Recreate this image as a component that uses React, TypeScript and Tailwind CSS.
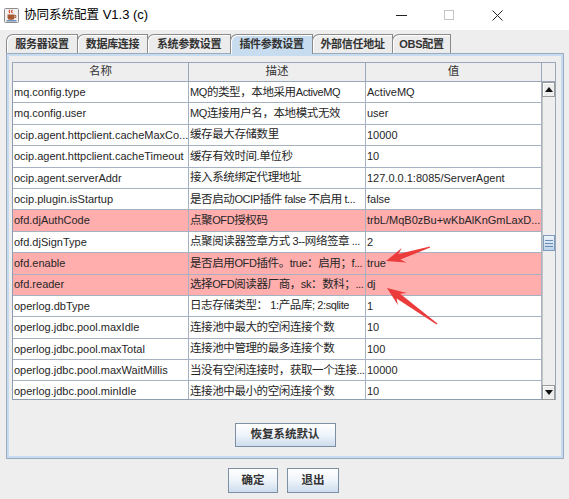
import React from "react";

type Row = { name: string; desc: string; value: string; hl?: boolean };

const rows: Row[] = [
  { name: "mq.config.type", desc: "MQ的类型，本地采用ActiveMQ", value: "ActiveMQ" },
  { name: "mq.config.user", desc: "MQ连接用户名，本地模式无效", value: "user" },
  { name: "ocip.agent.httpclient.cacheMaxCo...", desc: "缓存最大存储数里", value: "10000" },
  { name: "ocip.agent.httpclient.cacheTimeout", desc: "缓存有效时间.单位秒", value: "10" },
  { name: "ocip.agent.serverAddr", desc: "接入系统绑定代理地址", value: "127.0.0.1:8085/ServerAgent" },
  { name: "ocip.plugin.isStartup", desc: "是否启动OCIP插件 false 不启用 t...", value: "false" },
  { name: "ofd.djAuthCode", desc: "点聚OFD授权码", value: "trbL/MqB0zBu+wKbAlKnGmLaxD...", hl: true },
  { name: "ofd.djSignType", desc: "点聚阅读器签章方式 3--网络签章 ...", value: "2" },
  { name: "ofd.enable", desc: "是否启用OFD插件。true：启用；f...", value: "true", hl: true },
  { name: "ofd.reader", desc: "选择OFD阅读器厂商，sk：数科；...", value: "dj", hl: true },
  { name: "operlog.dbType", desc: "日志存储类型： 1:产品库; 2:sqlite", value: "1" },
  { name: "operlog.jdbc.pool.maxIdle", desc: "连接池中最大的空闲连接个数", value: "10" },
  { name: "operlog.jdbc.pool.maxTotal", desc: "连接池中管理的最多连接个数", value: "100" },
  { name: "operlog.jdbc.pool.maxWaitMillis", desc: "当没有空闲连接时，获取一个连接...", value: "10000" },
  { name: "operlog.jdbc.pool.minIdle", desc: "连接池中最小的空闲连接个数", value: "10" },
];

const tabs = [
  { label: "服务器设置", w: "w-[72px]" },
  { label: "数据库连接", w: "w-[71px]" },
  { label: "系统参数设置", w: "w-[84px]" },
  { label: "插件参数设置", w: "w-[83px]", active: true },
  { label: "外部信任地址", w: "w-[81px]" },
  { label: "OBS配置", w: "w-[59px]" },
];

const CJK_RUN = /([\u2e80-\u9fff\u3000-\u303f\uff00-\uffef]+)/;

// Latin and CJK runs get slightly different sizes, as the Java table renders them
function Mixed({ text, cjkClass }: { text: string; cjkClass: string }) {
  return (
    <>
      {text.split(CJK_RUN).map((part, i) =>
        part === "" ? null : CJK_RUN.test(part) ? (
          <span key={i} className={cjkClass}>
            {part}
          </span>
        ) : (
          <React.Fragment key={i}>{part}</React.Fragment>
        )
      )}
    </>
  );
}

function JavaIcon() {
  return (
    <svg width="15" height="15" viewBox="0 0 15 15" className="shrink-0">
      <rect x="0.5" y="0.5" width="14" height="14" rx="1" fill="#f2f2f2" stroke="#8c8c8c" />
      <path d="M6 1.8 q-1.6 1.6 0 3.2 M8.4 1.8 q-1.6 1.6 0 3.2" stroke="#d5472b" strokeWidth="1.1" fill="none" />
      <path d="M3.5 6.5 h7 v3 a2.2 2.2 0 0 1 -2.2 2.2 h-2.6 a2.2 2.2 0 0 1 -2.2 -2.2z" fill="#a65a33" />
      <path d="M10.5 7.5 h1.3 v2 h-1.6" stroke="#a65a33" strokeWidth="1" fill="none" />
      <path d="M2.5 12.8 h10" stroke="#4f74ad" strokeWidth="1.2" />
    </svg>
  );
}

function arrowPoints(tail: [number, number], tip: [number, number]) {
  const dx = tip[0] - tail[0];
  const dy = tip[1] - tail[1];
  const len = Math.hypot(dx, dy);
  const ux = dx / len;
  const uy = dy / len;
  const nx = -uy;
  const ny = ux;
  const at = (d: number, o: number) =>
    `${(tip[0] - ux * d + nx * o).toFixed(1)},${(tip[1] - uy * d + ny * o).toFixed(1)}`;
  const headLen = 19;
  return [
    `${tip[0]},${tip[1]}`,
    at(headLen, 7.5),
    at(headLen - 5, 3),
    `${(tail[0] + nx * 0.6).toFixed(1)},${(tail[1] + ny * 0.6).toFixed(1)}`,
    `${(tail[0] - nx * 0.6).toFixed(1)},${(tail[1] - ny * 0.6).toFixed(1)}`,
    at(headLen - 5, -3),
    at(headLen, -7.5),
  ].join(" ");
}

function ScrollArrow({ up }: { up?: boolean }) {
  return (
    <div className="h-[15px] shrink-0 flex items-center justify-center bg-[#eeeeee] border border-[#9a9a9a] shadow-[inset_1px_1px_0_#ffffff]">
      <svg width="8" height="5" viewBox="0 0 8 5">
        <polygon points={up ? "0,5 8,5 4,0" : "0,0 8,0 4,5"} fill="#111111" />
      </svg>
    </div>
  );
}

function Button({ children, w }: { children: React.ReactNode; w: string }) {
  return (
    <div
      className={`${w} h-full flex items-center justify-center border border-[#7d8fa3] bg-linear-to-b from-[#ffffff] via-[#eef4fa] to-[#cddced] text-[11.5px] font-bold text-[#333333]`}
    >
      {children}
    </div>
  );
}

export default function App() {
  return (
    <div className="relative w-[569px] h-[499px] overflow-hidden bg-[#eeeeee] font-['Liberation_Sans','Noto_Sans_CJK_SC',sans-serif] text-[#222222]">
      {/* title bar */}
      <div className="h-[30px] bg-white flex items-center">
        <div className="ml-[4px]">
          <JavaIcon />
        </div>
        <span className="ml-[5px] text-[13px] text-black">
          <Mixed text="协同系统配置 V1.3 (c)" cjkClass="text-[12.5px]" />
        </span>
        <div className="ml-auto mr-[48px] flex h-full">
          <div className="w-[48px] flex items-center justify-center">
            <div className="w-[11px] h-px bg-[#222222]" />
          </div>
          <div className="w-[48px] flex items-center justify-center">
            <div className="w-[10px] h-[10px] border border-[#c4c4c4]" />
          </div>
          <div className="w-[48px] flex items-center justify-center">
            <svg width="11" height="11" viewBox="0 0 11 11">
              <path d="M0.5 0.5 L10.5 10.5 M10.5 0.5 L0.5 10.5" stroke="#222222" strokeWidth="1" />
            </svg>
          </div>
        </div>
      </div>

      {/* tabs */}
      <div className="relative z-10 mt-[4px] h-[19px] pl-[6px] flex items-start">
        {tabs.map((t, i) => (
          <div
            key={t.label}
            className={`${t.w} ${i > 0 ? "-ml-px" : ""} ${
              t.active ? "h-[20px] bg-[#c8dcf0]" : "h-[19px] bg-[#ececec]"
            } shrink-0 flex items-center justify-center rounded-tl-[7px] border border-b-0 border-[#8a8a8a] shadow-[inset_1px_1px_0_#ffffff] text-[11px] font-bold text-[#333333] tracking-[-0.3px]`}
          >
            {t.label}
          </div>
        ))}
      </div>

      {/* tab content */}
      <div className="ml-[6px] w-[558px] h-[406px] border border-[#98abc1] shadow-[inset_0_0_0_2px_#c8dcf0] flex flex-col">
        <div className="mt-[8px] ml-[5px] w-[544px] flex flex-col">
          {/* header */}
          <div className="flex h-[20px] bg-[#eeeeee] border-t border-l border-[#9aa7b8] text-[11.5px] text-[#333333]">
            <div className="w-[176px] shrink-0 border-r border-b border-[#9aa7b8] flex items-center justify-center">名称</div>
            <div className="w-[177px] shrink-0 border-r border-b border-[#9aa7b8] flex items-center justify-center">描述</div>
            <div className="w-[176px] shrink-0 border-r border-b border-[#9aa7b8] flex items-center justify-center">值</div>
            <div className="w-[14px] shrink-0 border-r border-b border-[#9aa7b8]" />
          </div>
          {/* body */}
          <div className="flex h-[318px]">
            <div className="w-[530px] h-full overflow-hidden bg-white border-l border-b border-[#8e9db0] text-[11px]">
              {rows.map((r) => (
                <div
                  key={r.name}
                  className={`flex h-[21.4px] border-b border-[#a6b2c2] ${r.hl ? "bg-[#ffadad]" : "bg-white"}`}
                >
                  <div className="w-[176px] shrink-0 border-r border-[#a6b2c2] pl-[1px] flex items-center overflow-hidden whitespace-nowrap text-[#262626]">
                    {r.name}
                  </div>
                  <div className="w-[177px] shrink-0 border-r border-[#a6b2c2] pl-[1px] flex items-center overflow-hidden whitespace-nowrap text-[#262626] tracking-[-0.4px]">
                    <span>
                      <Mixed text={r.desc} cjkClass="text-[11.5px]" />
                    </span>
                  </div>
                  <div className="w-[176px] shrink-0 border-r border-[#a6b2c2] pl-[1px] flex items-center overflow-hidden whitespace-nowrap text-[#262626]">
                    {r.value}
                  </div>
                </div>
              ))}
            </div>
            {/* vertical scrollbar */}
            <div className="w-[14px] h-full flex flex-col bg-[#eeeeee] border-r border-[#9aa7b8]">
              <ScrollArrow up />
              <div className="flex-1 flex flex-col border-l border-[#c4c4c4]">
                <div className="mt-[138px] h-[16px] flex flex-col items-center justify-center gap-[2px] border border-[#7f9bbb] bg-linear-to-b from-[#eef4fb] to-[#bcd2ea]">
                  <div className="w-[8px] h-px bg-[#6b8db5]" />
                  <div className="w-[8px] h-px bg-[#6b8db5]" />
                  <div className="w-[8px] h-px bg-[#6b8db5]" />
                </div>
              </div>
              <ScrollArrow />
            </div>
          </div>
        </div>

        <div className="mt-[23px] h-[24px] flex justify-center">
          <Button w="w-[101px]">恢复系统默认</Button>
        </div>
      </div>

      {/* dialog buttons */}
      <div className="mt-[9px] h-[25px] flex justify-center gap-[9px] pr-[2px]">
        <Button w="w-[50px]">确定</Button>
        <Button w="w-[52px]">退出</Button>
      </div>

      {/* red annotation arrows */}
      <svg className="absolute inset-0 pointer-events-none" width="569" height="499" viewBox="0 0 569 499">
        <polygon points={arrowPoints([430, 247], [386, 261])} fill="#ec3b3b" />
        <polygon points={arrowPoints([437, 324], [387, 288])} fill="#ec3b3b" />
      </svg>
    </div>
  );
}
